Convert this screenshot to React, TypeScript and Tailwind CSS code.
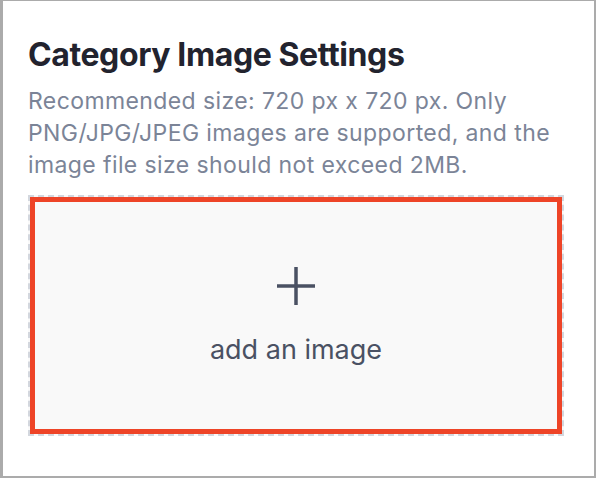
export default function App() {
  return (
    <div className="w-[596px] h-[478px] bg-white border-[#ababab] border-l-[3px] border-t border-r-2 border-b-2 pl-[25px] pr-[28px] pt-[34px] font-['Inter',sans-serif]">
      <h2 className="text-[32px] leading-[40px] font-bold text-[#22232e] tracking-[-0.4px]">
        Category Image Settings
      </h2>
      <p className="mt-[10px] text-[23px] leading-[32px] text-[#7b8497] tracking-[0.4px]">
        Recommended size: 720 px x 720 px. Only PNG/JPG/JPEG images are supported, and the image file size should not exceed 2MB.
      </p>

      {/* Dropzone */}
      <div className="relative mt-[14px] mr-[2px] h-[241px] border-2 border-dashed border-[#d3d7de] bg-[#f9f9f9]">
        <div className="flex h-full flex-col items-center justify-center gap-[29px] pt-[2px]">
          <svg width="38" height="38" viewBox="0 0 38 38" className="text-[#4a5163]">
            <path d="M19 0V38M0 19H38" stroke="currentColor" strokeWidth="3.5" fill="none" />
          </svg>
          <span className="text-[27px] leading-[32px] text-[#4a5163]">add an image</span>
        </div>

        {/* Highlight outline */}
        <div className="absolute inset-0 border-[5px] border-[#ee4427]" />
      </div>
    </div>
  );
}
